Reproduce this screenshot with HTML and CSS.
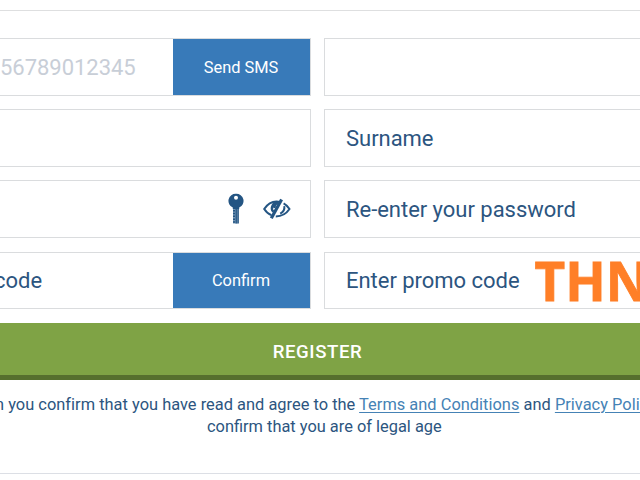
FILE: index.html
```html
<!DOCTYPE html>
<html lang="en">
<head>
<meta charset="utf-8">
<title>Registration</title>
<link rel="stylesheet" href="styles.css">
</head>
<body>
<main class="panel">
  <form class="form">
    <div class="grid">
      <div class="field"><span class="value phone">56789012345</span><button type="button" class="action">Send SMS</button></div>
      <div class="field"></div>
      <div class="field"></div>
      <div class="field"><span class="value">Surname</span></div>
      <div class="field icons">
        <svg class="key" viewBox="0 0 16 32" width="16" height="32">
          <path fill="#245583" fill-rule="evenodd" d="M8 .8a7.2 7.2 0 0 1 3.2 13.8V16H4.8v-1.4A7.2 7.2 0 0 1 8 .8zm0 1.9a2 2 0 1 0 0 4 2 2 0 0 0 0-4z"/>
          <path fill="#7797b5" d="M5 16h5v14.500H5z"/>
          <path stroke="#245583" stroke-width="1.300" d="M8.200 16v14.500M10.200 16v14.500"/>
          <path stroke="#245583" stroke-width="2" stroke-dasharray="1.500 1.300" d="M6 17v13.500"/>
        </svg>
        <svg class="eye" viewBox="0 0 28 22" width="28" height="22" fill="none" stroke="#245583" stroke-width="2">
          <path d="M8.400 17.100C5 15.800 2.800 13.500 1.200 11 4.500 6 8.500 3.500 13.500 3.500c1.200 0 2.300.1 3.400.5M12.800 18.400c6 0 10.500-2.700 13.700-7.400-1.400-2.300-3.400-4.400-5.900-5.700"/>
          <path d="M18.600 1.500 8.300 20.300" stroke-width="3.200"/>
          <path d="M15.300 4.500a5.600 5.600 0 0 0-4.900 9.300M14.800 5.300c-2.500.4-3.500 2.300-3.100 4.700" stroke-width="2.400"/>
          <path d="M21.300 8.200c.5 3.200-1.200 6-4.100 7.400"/>
        </svg>
      </div>
      <div class="field"><span class="value">Re-enter your password</span></div>
      <div class="field"><span class="value code">code</span><button type="button" class="action">Confirm</button></div>
      <div class="field"><span class="value">Enter promo code</span><strong class="promo">THN</strong></div>
    </div>
    <button type="button" class="register">REGISTER</button>
    <p class="terms">n you confirm that you have read and agree to the <a href="#">Terms and Conditions</a> and <a href="#">Privacy Policy</a></p>
    <p class="age">confirm that you are of legal age</p>
  </form>
</main>
</body>
</html>
```
FILE: styles.css
```css
* { box-sizing: border-box; }
body { margin: 0; overflow: hidden; background: #fff; color: #2c5580; font-family: Roboto, sans-serif; }
.panel { width: 640px; height: 464px; margin-top: 10px; overflow: hidden; border-top: 1px solid #dedfe0; border-bottom: 1px solid #dcdfe5; }
.form { padding-top: 27px; }
.grid { display: grid; grid-template-columns: 331px 331px; grid-template-rows: 58px 58px 58px 57px; column-gap: 13px; row-gap: 13.2px; margin-left: -20px; }
.field { display: flex; align-items: center; border: 1px solid #dadcde; padding-left: 21px; overflow: hidden; white-space: nowrap; }
.value { font-size: 22px; line-height: 29px; letter-spacing: -.03px; }
.phone { color: #c8ced7; margin-left: -2px; }
.code { margin-left: -8px; }
.action { align-self: stretch; width: 137px; margin-left: auto; padding: 0 1px 0 0; border: 0; background: #387ab9; color: #fff; font: 16.4px Roboto, sans-serif; flex: none; }
.icons { justify-content: flex-end; padding-right: 19.5px; gap: 19px; }
.promo { font: 700 53px/56px "Open Sans", sans-serif; color: #ff7f27; margin: 1px 0 0 15px; -webkit-text-stroke: .8px #ff7f27; }
.register { display: block; width: 100%; height: 57px; margin-top: 14.4px; padding: 6px 5px 0 0; border: 0; border-bottom: 5px solid #566f2e; background: #7fa345; color: #fff; font: 500 18.6px Roboto, sans-serif; letter-spacing: .6px; }
.terms, .age { margin: 0; font-size: 16.4px; line-height: 22px; white-space: nowrap; }
.terms { margin: 14px 0 0 -5px; letter-spacing: .02px; }
.age { padding-left: 207px; }
a { color: #4582b5; text-underline-offset: 2px; text-decoration-thickness: 1px; }
```
